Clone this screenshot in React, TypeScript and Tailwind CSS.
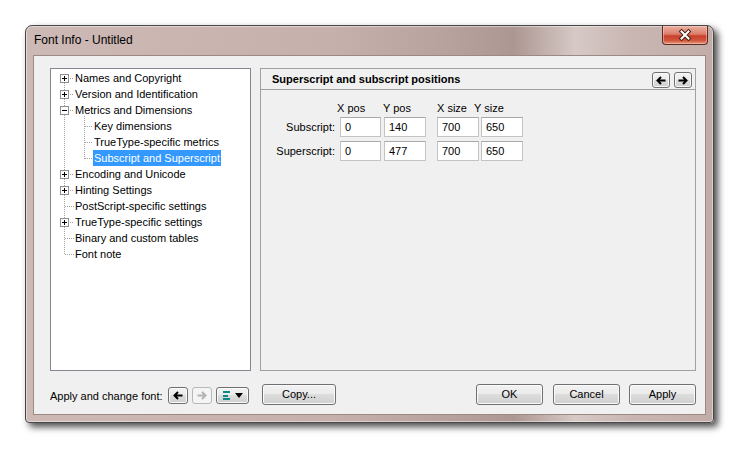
import React from 'react';

type Item = { label: string; level: 0 | 1; box?: '+' | '-'; selected?: boolean };

const items: Item[] = [
  { label: 'Names and Copyright', level: 0, box: '+' },
  { label: 'Version and Identification', level: 0, box: '+' },
  { label: 'Metrics and Dimensions', level: 0, box: '-' },
  { label: 'Key dimensions', level: 1 },
  { label: 'TrueType-specific metrics', level: 1 },
  { label: 'Subscript and Superscript', level: 1, selected: true },
  { label: 'Encoding and Unicode', level: 0, box: '+' },
  { label: 'Hinting Settings', level: 0, box: '+' },
  { label: 'PostScript-specific settings', level: 0 },
  { label: 'TrueType-specific settings', level: 0, box: '+' },
  { label: 'Binary and custom tables', level: 0 },
  { label: 'Font note', level: 0 },
];

function TreeLines() {
  const dot = { stroke: '#a0a0a0', strokeWidth: 1, strokeDasharray: '1 1' };
  const cy = (i: number) => 9.5 + 16 * i;
  return (
    <svg
      className="absolute left-0 top-0"
      width="199"
      height="301"
      viewBox="0 0 199 301"
      shapeRendering="crispEdges"
    >
      <line x1="13.5" y1="14" x2="13.5" y2={cy(11)} {...dot} />
      <line x1="33.5" y1="47" x2="33.5" y2={cy(5)} {...dot} />
      {items.map((it, i) => {
        const y = cy(i);
        if (it.level === 1) {
          return <line key={i} x1="34" y1={y} x2="42" y2={y} {...dot} />;
        }
        return (
          <g key={i}>
            <line x1={it.box ? 19 : 14} y1={y} x2="23" y2={y} {...dot} />
            {it.box && (
              <g>
                <rect x="9.5" y={y - 4} width="8" height="8" fill="#ffffff" stroke="#8f8f8f" />
                <line x1="11" y1={y} x2="16" y2={y} stroke="#000" />
                {it.box === '+' && <line x1="13.5" y1={y - 2.5} x2="13.5" y2={y + 2.5} stroke="#000" />}
              </g>
            )}
          </g>
        );
      })}
    </svg>
  );
}

function Arrow({ dir, color }: { dir: 'left' | 'right'; color: string }) {
  return (
    <svg width="10" height="9" viewBox="0 0 10 9">
      <path
        d={dir === 'left' ? 'M9.5 4.5H2M5 1L1.5 4.5L5 8' : 'M0.5 4.5H8M5 1L8.5 4.5L5 8'}
        stroke={color}
        strokeWidth="2"
        fill="none"
      />
    </svg>
  );
}

const btn =
  'flex items-center justify-center rounded-[3px] border border-[#707070] bg-[linear-gradient(to_bottom,#f2f2f2_0%,#ebebeb_49%,#dddddd_50%,#cfcfcf_100%)] shadow-[inset_0_0_0_1px_#fbfbfb]';

function Field({ value, w, ml }: { value: string; w: string; ml: string }) {
  return (
    <div
      className={`${w} ${ml} h-[20px] flex items-center pl-[4px] bg-white border border-[#c4c4c4] border-t-[#a9a9a9] leading-[14px]`}
    >
      {value}
    </div>
  );
}

export default function App() {
  return (
    <div className="w-[744px] h-[450px] bg-white pt-[25px] pl-[25px] overflow-hidden font-['Liberation_Sans',Arial,sans-serif] text-[11px] text-black">
      <div className="w-[689px] h-[398px] rounded-t-[7px] rounded-b-[4px] border border-[#474747] bg-[linear-gradient(90deg,#cdb9b5_0%,#c6b0ac_45%,#b7a19c_62%,#ad9792_71%,#d6c9c6_80%,#c9b6b2_88%,#c2aca8_100%)] shadow-[4px_4px_7px_0px_rgba(0,0,0,0.7),inset_0_0_0_1px_rgba(255,255,255,0.45)] flex flex-col">
        {/* Title bar */}
        <div className="h-[29px] flex items-start">
          <span className="pl-[8px] pt-[7px] text-[12px] leading-[15px]">Font Info - Untitled</span>
          <div className="ml-auto mr-[5px] w-[46px] h-[19px] rounded-b-[4px] border border-t-0 border-[#5b2a22] bg-[linear-gradient(to_bottom,#eab0a2_0%,#dc7e6b_45%,#c8402a_55%,#d2553c_80%,#e39a7e_100%)] shadow-[inset_0_0_0_1px_rgba(255,220,210,0.45)] flex items-center justify-center">
            <svg width="14" height="12" viewBox="0 0 14 12">
              <path d="M3.5 2.5L10.5 9.5M10.5 2.5L3.5 9.5" stroke="#4a2019" strokeWidth="4" strokeLinecap="square" />
              <path d="M3.5 2.5L10.5 9.5M10.5 2.5L3.5 9.5" stroke="#ffffff" strokeWidth="2" strokeLinecap="square" />
            </svg>
          </div>
        </div>

        {/* Client */}
        <div className="mx-[7px] h-[360px] border border-[#9c8984] bg-[#f0f0f0] flex flex-col pl-[16px] pt-[12px] pr-[9px]">
          <div className="flex h-[303px]">
            {/* Tree */}
            <div className="relative w-[201px] h-full bg-white border border-[#828790] pt-[1px] overflow-hidden">
              <TreeLines />
              <div className="relative flex flex-col">
                {items.map((it, i) => (
                  <div key={i} className="h-[16px] flex items-center leading-[16px] whitespace-nowrap">
                    {it.level === 0 ? (
                      <span className="ml-[24px]">{it.label}</span>
                    ) : (
                      <span
                        className={`ml-[42px] pl-[1px] pr-[1px] ${it.selected ? 'bg-[#3399ff] text-white' : ''}`}
                      >
                        {it.label}
                      </span>
                    )}
                  </div>
                ))}
              </div>
            </div>

            {/* Right panel */}
            <div className="ml-[9px] w-[436px] h-full border border-[#a0a0a0] flex flex-col">
              <div className="h-[21px] border-b border-[#a0a0a0] flex items-center pl-[11px] pr-[3px]">
                <span className="font-bold leading-[14px]">Superscript and subscript positions</span>
                <div className="ml-auto flex gap-[4px] pt-[2px]">
                  <div className={`${btn} w-[18px] h-[16px]`}>
                    <Arrow dir="left" color="#000" />
                  </div>
                  <div className={`${btn} w-[18px] h-[16px]`}>
                    <Arrow dir="right" color="#000" />
                  </div>
                </div>
              </div>
              <div className="flex flex-col pt-[11px]">
                <div className="flex h-[14px] leading-[14px]">
                  <span className="w-[76px]" />
                  <span className="w-[46px]">X pos</span>
                  <span className="w-[54px]">Y pos</span>
                  <span className="w-[37px]">X size</span>
                  <span>Y size</span>
                </div>
                <div className="flex items-center mt-[2px]">
                  <span className="w-[74px] text-right">Subscript:</span>
                  <Field value="0" w="w-[41px]" ml="ml-[5px]" />
                  <Field value="140" w="w-[42px]" ml="ml-[3px]" />
                  <Field value="700" w="w-[42px]" ml="ml-[11px]" />
                  <Field value="650" w="w-[42px]" ml="ml-[2px]" />
                </div>
                <div className="flex items-center mt-[4px]">
                  <span className="w-[74px] text-right">Superscript:</span>
                  <Field value="0" w="w-[41px]" ml="ml-[5px]" />
                  <Field value="477" w="w-[42px]" ml="ml-[3px]" />
                  <Field value="700" w="w-[42px]" ml="ml-[11px]" />
                  <Field value="650" w="w-[42px]" ml="ml-[2px]" />
                </div>
              </div>
            </div>
          </div>

          {/* Bottom row */}
          <div className="flex items-end mt-[13px] h-[21px]">
            <span className="w-[118px] pb-[2px] leading-[14px] whitespace-nowrap">Apply and change font:</span>
            <div className={`${btn} w-[20px] h-[17px] mb-[1px]`}>
              <Arrow dir="left" color="#000" />
            </div>
            <div className="ml-[4px] w-[20px] h-[17px] mb-[1px] rounded-[3px] border border-[#b5b9bc] bg-[#f4f4f4] flex items-center justify-center">
              <Arrow dir="right" color="#b4b4b4" />
            </div>
            <div className={`${btn} ml-[4px] w-[33px] h-[17px] mb-[1px] gap-[5px]`}>
              <svg width="7" height="9" viewBox="0 0 7 9" shapeRendering="crispEdges">
                <rect x="0" y="0" width="7" height="2" fill="#0e8a8a" />
                <rect x="0" y="3.5" width="5" height="2" fill="#0e8a8a" />
                <rect x="0" y="7" width="7" height="2" fill="#0e8a8a" />
              </svg>
              <svg width="8" height="5" viewBox="0 0 8 5">
                <path d="M0 0H8L4 5Z" fill="#000" />
              </svg>
            </div>
            <div className={`${btn} ml-[13px] w-[74px] h-[21px]`}>Copy...</div>
            <div
              className={`${btn} ml-auto w-[67px] h-[21px] border-[#3c7fb1] shadow-[inset_0_0_0_1px_#bfe8f8]`}
            >
              OK
            </div>
            <div className={`${btn} ml-[10px] w-[67px] h-[21px]`}>Cancel</div>
            <div className={`${btn} ml-[9px] w-[67px] h-[21px]`}>Apply</div>
          </div>
        </div>
      </div>
    </div>
  );
}
